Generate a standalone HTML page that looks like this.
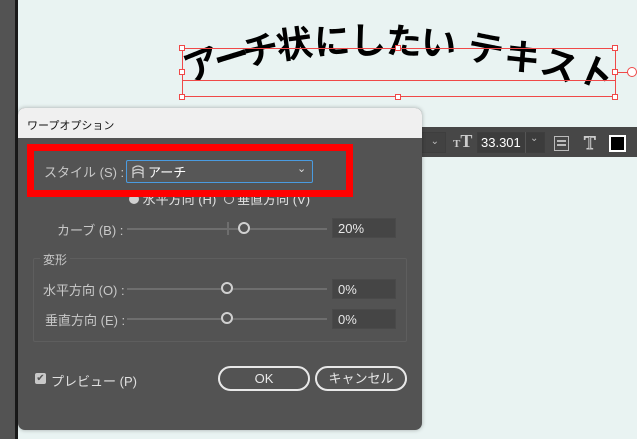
<!DOCTYPE html>
<html><head><meta charset="utf-8"><style>
*{margin:0;padding:0;box-sizing:border-box}
body{width:637px;height:439px;overflow:hidden;background:#e9f3f2;position:relative;font-family:"Liberation Sans","Noto Sans CJK JP",sans-serif}
.a{position:absolute}
.arch{position:absolute;font-size:36px;font-weight:bold;color:#000;line-height:1;font-family:"Noto Sans CJK JP",sans-serif}
.h{position:absolute;width:6px;height:6px;border:1px solid #f04848;background:#fff}
.lbl{position:absolute;color:#c8c8c8;font-size:13px;white-space:nowrap}
.trk{position:absolute;height:2px;background:#6e6e6e}
.knob{position:absolute;width:12px;height:12px;border:2px solid #d0d0d0;border-radius:50%;background:#535353}
.inp{position:absolute;background:#454545;border:1px solid #4a4a4a;color:#e8e8e8;font-size:13px;padding:2px 0 0 5px;width:64px;height:20px}
.btn{position:absolute;border:2px solid #e8e8e8;border-radius:13px;color:#e8e8e8;font-size:13px;text-align:center;line-height:21px;height:25px}
</style></head><body>
<div class="a" style="left:0;top:0;width:15px;height:439px;background:#535353"></div>
<div class="a" style="left:15px;top:0;width:3px;height:439px;background:#1a1a1a"></div>

<div class="arch" style="left:183px;top:44px;transform:rotate(-22deg)">ア</div>
<div class="arch" style="left:213px;top:37px;transform:rotate(-17deg)">ー</div>
<div class="arch" style="left:242px;top:30px;transform:rotate(-13deg)">チ</div>
<div class="arch" style="left:276px;top:24px;transform:rotate(-8deg)">状</div>
<div class="arch" style="left:314px;top:21px;transform:rotate(-4deg)">に</div>
<div class="arch" style="left:350px;top:20px;transform:rotate(0deg)">し</div>
<div class="arch" style="left:386px;top:21px;transform:rotate(3deg)">た</div>
<div class="arch" style="left:421px;top:23px;transform:rotate(7deg)">い</div>
<div class="arch" style="left:468px;top:29px;transform:rotate(11deg)">テ</div>
<div class="arch" style="left:505px;top:37px;transform:rotate(15deg)">キ</div>
<div class="arch" style="left:542px;top:45px;transform:rotate(19deg)">ス</div>
<div class="arch" style="left:579px;top:53px;transform:rotate(23deg)">ト</div>

<div class="a" style="left:182px;top:48px;width:434px;height:49px;border:1px solid #f04848"></div>
<div class="a" style="left:182px;top:80px;width:434px;height:1px;background:#f04848"></div>
<div class="h" style="left:179px;top:45px"></div><div class="h" style="left:395px;top:45px"></div><div class="h" style="left:612px;top:45px"></div>
<div class="h" style="left:179px;top:69px"></div><div class="h" style="left:612px;top:69px"></div>
<div class="h" style="left:179px;top:94px"></div><div class="h" style="left:395px;top:94px"></div><div class="h" style="left:612px;top:94px"></div>
<div class="a" style="left:618px;top:72px;width:10px;height:1px;background:#f04848"></div>
<div class="a" style="left:627px;top:67px;width:10px;height:10px;border:1px solid #f04848;border-radius:50%;background:#fff"></div>

<div class="a" style="left:420px;top:127px;width:217px;height:30px;background:#474747"></div>
<div class="a" style="left:420px;top:132px;width:26px;height:21px;border:1px solid #3e3e3e;background:#424242;color:#bbb;font-size:10px;text-align:right;padding:3px 6px 0 0">⌄</div>
<div class="a" style="left:453px;top:131px;color:#ccc;font-family:'Liberation Serif',serif;font-weight:bold"><span style="font-size:11px">T</span><span style="font-size:18px">T</span></div>
<div class="a" style="left:477px;top:132px;width:68px;height:21px;background:#3c3c3c;border:1px solid #3e3e3e"></div>
<div class="a" style="left:481px;top:135px;color:#fff;font-size:13px">33.301</div>
<div class="a" style="left:525px;top:132px;width:1px;height:21px;background:#555"></div>
<div class="a" style="left:530px;top:133px;color:#bbb;font-size:10px">⌄</div>
<div class="a" style="left:554px;top:136px;width:15px;height:15px;border:1px solid #bbb"></div>
<div class="a" style="left:557px;top:140px;width:9px;height:2px;background:#bbb"></div>
<div class="a" style="left:557px;top:144px;width:9px;height:2px;background:#bbb"></div>
<div class="a" style="left:584px;top:133px;color:#333;font-size:19px;font-family:'Liberation Serif',serif;-webkit-text-stroke:1px #ccc">T</div>
<div class="a" style="left:609px;top:135px;width:17px;height:17px;background:#000;border:2px solid #fff"></div>

<div class="a" style="left:18px;top:108px;width:404px;height:322px;background:#535353;border-radius:7px;overflow:hidden;box-shadow:0 0 4px rgba(0,0,0,.3)">
 <div class="a" style="left:0;top:0;width:404px;height:30px;background:#f0f0f0"></div>
 <div class="a" style="left:9px;top:9px;font-size:11px;color:#111">ワープオプション</div>
</div>
<div class="lbl" style="left:44px;top:162px">スタイル (S) :</div>
<div class="a" style="left:126px;top:160px;width:187px;height:23px;border:1px solid #4a9be0;background:#575757;border-radius:2px"></div>
<svg class="a" style="left:131px;top:164px" width="14" height="15" viewBox="0 0 14 15"><path d="M2 14V4Q7 0 12 4V14M2 7Q7 4 12 7M2 10Q7 7 12 10" fill="none" stroke="#ccc" stroke-width="1.3"/></svg>
<div class="a" style="left:148px;top:162px;color:#fff;font-size:13px">アーチ</div>
<div class="a" style="left:297px;top:162px;color:#ddd;font-size:11px">⌄</div>
<div class="lbl" style="left:129px;top:189px;color:#e0e0e0"><span style="display:inline-block;width:10px;height:10px;border-radius:50%;background:#d0d0d0"></span> 水平方向 (H) &nbsp;<span style="display:inline-block;width:10px;height:10px;border-radius:50%;border:1.5px solid #d0d0d0"></span> 垂直方向 (V)</div>
<div class="a" style="left:27px;top:144px;width:326px;height:53px;border:7px solid #ff0000"></div>

<div class="lbl" style="left:57px;top:220px">カーブ (B) :</div>
<div class="trk" style="left:127px;top:228px;width:200px"></div>
<div class="a" style="left:227px;top:222px;width:2px;height:13px;background:#6e6e6e"></div>
<div class="knob" style="left:238px;top:222px"></div>
<div class="inp" style="left:332px;top:218px">20%</div>

<div class="a" style="left:33px;top:258px;width:374px;height:84px;border:1px solid #5e5e5e;border-radius:2px"></div>
<div class="a" style="left:40px;top:251px;background:#535353;padding:0 3px;color:#c8c8c8;font-size:12px">変形</div>
<div class="lbl" style="left:43px;top:280px">水平方向 (O) :</div>
<div class="trk" style="left:127px;top:288px;width:200px"></div>
<div class="knob" style="left:221px;top:282px"></div>
<div class="inp" style="left:332px;top:279px">0%</div>
<div class="lbl" style="left:45px;top:310px">垂直方向 (E) :</div>
<div class="trk" style="left:127px;top:318px;width:200px"></div>
<div class="knob" style="left:221px;top:312px"></div>
<div class="inp" style="left:332px;top:309px">0%</div>

<div class="a" style="left:35px;top:373px;width:11px;height:11px;background:#c8c8c8;border-radius:2px;color:#535353;font-size:10px;line-height:11px;text-align:center">✔</div>
<div class="lbl" style="left:51px;top:371px;color:#e0e0e0">プレビュー (P)</div>
<div class="btn" style="left:218px;top:366px;width:92px">OK</div>
<div class="btn" style="left:315px;top:366px;width:92px">キャンセル</div>
</body></html>
